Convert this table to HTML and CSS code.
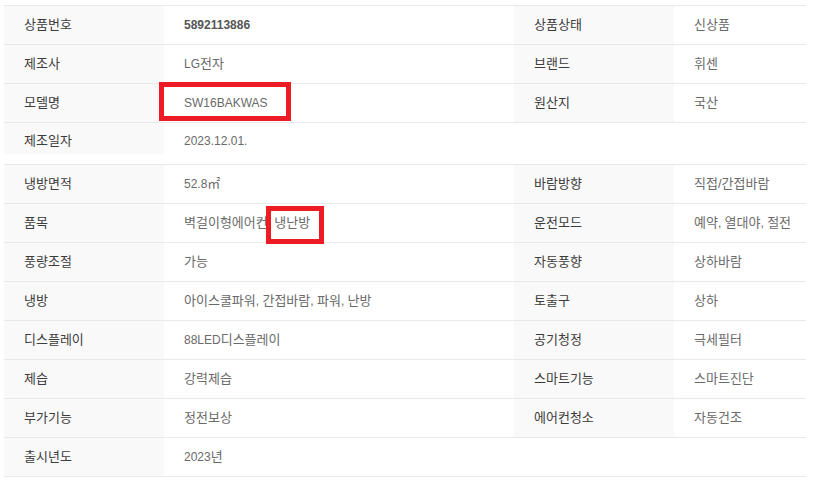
FILE: index.html
```html
<!DOCTYPE html>
<html lang="ko">
<head>
<meta charset="utf-8">
<title>상품정보</title>
<link rel="stylesheet" href="styles.css">
</head>
<body>
<div class="page">
  <div class="spec spec-top">
    <div class="row">
      <div class="th">상품번호</div><div class="td strong"><span class="en">5892113886</span></div>
      <div class="th">상품상태</div><div class="td">신상품</div>
    </div>
    <div class="row">
      <div class="th">제조사</div><div class="td"><span class="en">LG</span>전자</div>
      <div class="th">브랜드</div><div class="td">휘센</div>
    </div>
    <div class="row">
      <div class="th">모델명</div><div class="td"><span class="en">SW16BAKWAS</span></div>
      <div class="th">원산지</div><div class="td">국산</div>
    </div>
    <div class="row row-short">
      <div class="th">제조일자</div><div class="td"><span class="en">2023.12.01.</span></div>
      <div class="empty"></div><div class="empty"></div>
    </div>
  </div>

  <div class="spec spec-bottom">
    <div class="row">
      <div class="th">냉방면적</div><div class="td"><span class="en">52.8</span>㎡</div>
      <div class="th">바람방향</div><div class="td">직접/간접바람</div>
    </div>
    <div class="row">
      <div class="th">품목</div><div class="td wide-gap">벽걸이형에어컨 냉난방</div>
      <div class="th">운전모드</div><div class="td">예약<span class="en">, </span>열대야<span class="en">, </span>절전</div>
    </div>
    <div class="row">
      <div class="th">풍량조절</div><div class="td">가능</div>
      <div class="th">자동풍향</div><div class="td">상하바람</div>
    </div>
    <div class="row">
      <div class="th">냉방</div><div class="td">아이스쿨파워<span class="en">, </span>간접바람<span class="en">, </span>파워<span class="en">, </span>난방</div>
      <div class="th">토출구</div><div class="td">상하</div>
    </div>
    <div class="row">
      <div class="th">디스플레이</div><div class="td"><span class="en">88LED</span>디스플레이</div>
      <div class="th">공기청정</div><div class="td">극세필터</div>
    </div>
    <div class="row">
      <div class="th">제습</div><div class="td">강력제습</div>
      <div class="th">스마트기능</div><div class="td">스마트진단</div>
    </div>
    <div class="row">
      <div class="th">부가기능</div><div class="td">정전보상</div>
      <div class="th">에어컨청소</div><div class="td">자동건조</div>
    </div>
    <div class="row">
      <div class="th">출시년도</div><div class="td"><span class="en">2023</span>년</div>
      <div class="empty"></div><div class="empty"></div>
    </div>
  </div>

  <div class="mark mark-model"></div>
  <div class="mark mark-type"></div>
</div>
</body>
</html>
```

FILE: styles.css
```css
html, body {
  margin: 0;
  padding: 0;
  background: #ffffff;
}

.page {
  position: relative;
  padding: 5px 0 0 4px;
  font-family: "Liberation Sans", "Noto Sans CJK KR", sans-serif;
  font-size: 13px;
}

.spec {
  width: 802px;
}

.spec-bottom {
  margin-top: 10px;
  border-bottom: 1px solid #e9e9e9;
}

.row {
  display: grid;
  grid-template-columns: 160px 350px 160px 132px;
  border-top: 1px solid #e9e9e9;
  height: 38px;
}

.row-short {
  height: 31px;
}

.th,
.td {
  padding-left: 20px;
  line-height: 38px;
  white-space: nowrap;
}

.row-short .th,
.row-short .td {
  line-height: 20px;
  padding-top: 8px;
}

.th {
  background: #f9f9f9;
  color: #3c3c3c;
}

.td {
  color: #6a6a6a;
}

.en {
  font-size: 12px;
}

.wide-gap {
  word-spacing: 3px;
}

.td.strong {
  font-weight: bold;
  color: #555555;
}

.mark {
  position: absolute;
  border: 5px solid #ed1c24;
  box-sizing: border-box;
}

.mark-model {
  left: 159px;
  top: 82px;
  width: 132px;
  height: 39px;
}

.mark-type {
  left: 266px;
  top: 206px;
  width: 58px;
  height: 38px;
}
```
